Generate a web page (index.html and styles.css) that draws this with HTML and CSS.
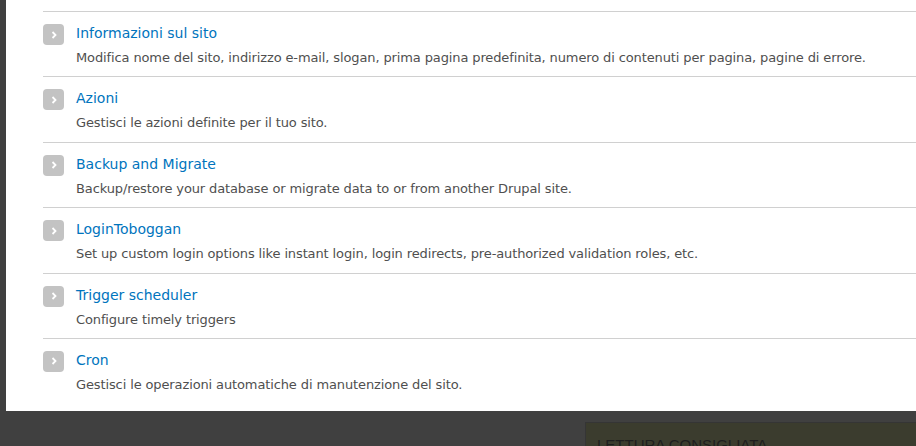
FILE: index.html
```html
<!DOCTYPE html>
<html lang="it">
<head>
    <meta charset="UTF-8">
    <title>Configurazione di sistema</title>
    <link rel="stylesheet" href="styles.css">
</head>
<body>
    <div class="panel">
        <ul class="admin-list">
            <li class="admin-item">
                <span class="arrow"><svg width="8" height="10" viewBox="0 0 8 10"><path d="M2.5 2 L5.5 5 L2.5 8" fill="none" stroke="#fff" stroke-width="1.8"/></svg></span>
                <div class="item-text">
                    <a class="item-title" href="#">Informazioni sul sito</a>
                    <div class="item-desc">Modifica nome del sito, indirizzo e-mail, slogan, prima pagina predefinita, numero di contenuti per pagina, pagine di errore.</div>
                </div>
            </li>
            <li class="admin-item">
                <span class="arrow"><svg width="8" height="10" viewBox="0 0 8 10"><path d="M2.5 2 L5.5 5 L2.5 8" fill="none" stroke="#fff" stroke-width="1.8"/></svg></span>
                <div class="item-text">
                    <a class="item-title" href="#">Azioni</a>
                    <div class="item-desc">Gestisci le azioni definite per il tuo sito.</div>
                </div>
            </li>
            <li class="admin-item">
                <span class="arrow"><svg width="8" height="10" viewBox="0 0 8 10"><path d="M2.5 2 L5.5 5 L2.5 8" fill="none" stroke="#fff" stroke-width="1.8"/></svg></span>
                <div class="item-text">
                    <a class="item-title" href="#">Backup and Migrate</a>
                    <div class="item-desc">Backup/restore your database or migrate data to or from another Drupal site.</div>
                </div>
            </li>
            <li class="admin-item">
                <span class="arrow"><svg width="8" height="10" viewBox="0 0 8 10"><path d="M2.5 2 L5.5 5 L2.5 8" fill="none" stroke="#fff" stroke-width="1.8"/></svg></span>
                <div class="item-text">
                    <a class="item-title" href="#">LoginToboggan</a>
                    <div class="item-desc">Set up custom login options like instant login, login redirects, pre-authorized validation roles, etc.</div>
                </div>
            </li>
            <li class="admin-item">
                <span class="arrow"><svg width="8" height="10" viewBox="0 0 8 10"><path d="M2.5 2 L5.5 5 L2.5 8" fill="none" stroke="#fff" stroke-width="1.8"/></svg></span>
                <div class="item-text">
                    <a class="item-title" href="#">Trigger scheduler</a>
                    <div class="item-desc">Configure timely triggers</div>
                </div>
            </li>
            <li class="admin-item">
                <span class="arrow"><svg width="8" height="10" viewBox="0 0 8 10"><path d="M2.5 2 L5.5 5 L2.5 8" fill="none" stroke="#fff" stroke-width="1.8"/></svg></span>
                <div class="item-text">
                    <a class="item-title" href="#">Cron</a>
                    <div class="item-desc">Gestisci le operazioni automatiche di manutenzione del sito.</div>
                </div>
            </li>
        </ul>
    </div>

    <div class="bottom">
        <div class="reading-box">LETTURA CONSIGLIATA</div>
    </div>
</body>
</html>
```

FILE: styles.css
```css
html, body {
    height: 446px;
    overflow: hidden;
}

body {
    margin: 0;
    padding: 0;
    background-color: #404040;
    font-family: "DejaVu Sans", "Lucida Grande", sans-serif;
}

.panel {
    margin-left: 6px;
    background-color: #ffffff;
    height: 411px;
    padding: 11px 0 0 37px;
    box-sizing: border-box;
}

.admin-list {
    list-style: none;
    margin: 0;
    padding: 0;
}

.admin-item {
    display: flex;
    border-top: 1px solid #d0d0d0;
    padding: 11px 0 8.4px 0;
}

.arrow {
    width: 21px;
    height: 21px;
    margin-top: 1px;
    border-radius: 4px;
    background-color: #c3c3c3;
    display: flex;
    align-items: center;
    justify-content: center;
    flex-shrink: 0;
}

.item-text {
    margin-left: 12px;
}

.item-title {
    display: block;
    color: #0074bd;
    text-decoration: none;
    font-size: 14px;
    line-height: 20px;
}

.item-desc {
    margin-top: 5px;
    color: #4f4f4f;
    font-size: 13px;
    letter-spacing: -0.12px;
    line-height: 20px;
}

.bottom {
    height: 35px;
    overflow: hidden;
    padding: 11px 0 0 585px;
}

.reading-box {
    background-color: #3b3c2e;
    border: 1px solid #353535;
    border-right: none;
    height: 40px;
    padding: 13px 0 0 11px;
    color: #1e1e1e;
    font-family: "Liberation Sans", Arial, sans-serif;
    font-size: 15px;
}
```
